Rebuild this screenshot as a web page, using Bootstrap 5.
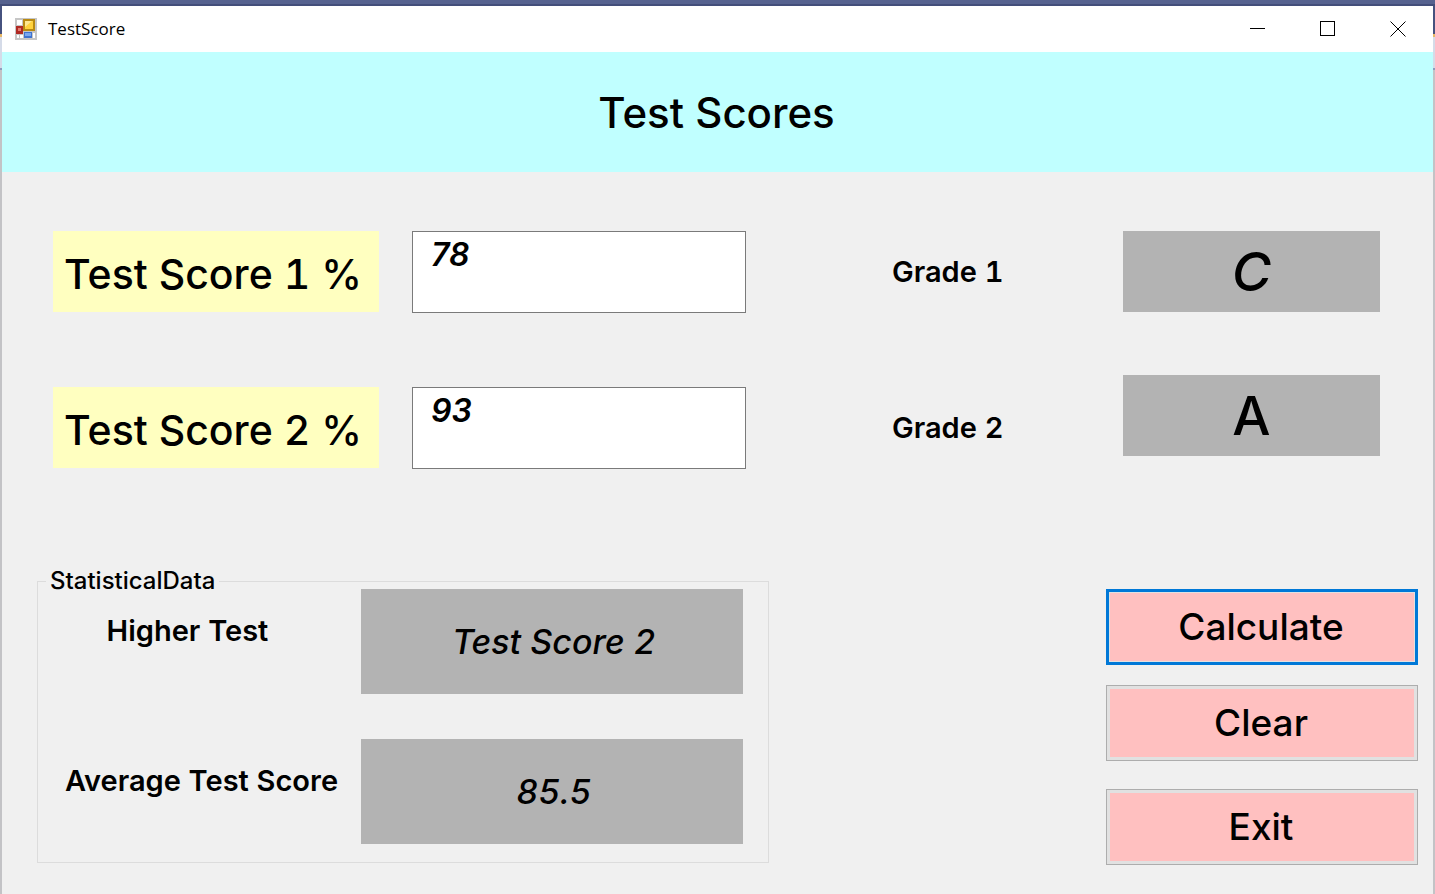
<!DOCTYPE html>
<html lang="en">
<head>
<meta charset="utf-8">
<meta name="viewport" content="width=device-width, initial-scale=1">
<title>TestScore</title>
<link href="https://cdn.jsdelivr.net/npm/bootstrap@5.3.0/dist/css/bootstrap.min.css" rel="stylesheet">
<style>
  body {
    font-family: Inter, "Liberation Sans", sans-serif;
    font-weight: 500;
    font-variant-numeric: tabular-nums;
    color: #000;
    padding: 6px 2px 1px 2px;
    background:
      linear-gradient(#000, #000) 121px 100% / 4px 2px no-repeat,
      linear-gradient(#56628f 0 4px, #434e7a 4px 6px, #46527f 6px 34px, #e8b866 34px 37px, #d5dbe8 37px 68px, #8f9bbd 68px 70px, #c3c3c6 70px);
  }
  .app-window { background: #f0f0f0; }
  .title-bar { background: #fff; height: 46px; padding-left: 13px; font: 400 17px/24px "Open Sans", "Noto Sans", sans-serif; }
  .title-text { margin-left: 11px; }
  .win-btn { width: 70px; height: 46px; line-height: 16px; }
  .win-btn svg { display: block; margin: 0 auto; }
  .banner { background: #c0ffff; height: 120px; font-size: 42px; line-height: 48px; font-weight: 500; padding: 2px 2px 0 0; }
  .scores { display: grid; grid-template-columns: 326fr 33fr 334fr 146fr 231fr 257fr; padding: 59px 53px 0 51px; }
  .score-col { display: flex; flex-direction: column; gap: 75px; }
  .grade-col { display: flex; flex-direction: column; gap: 63px; }
  .score-label { background: #ffffc0; height: 81px; font-size: 41px; line-height: 86px; white-space: nowrap; padding-left: 11px; }
  .score-input { height: 82px; margin-bottom: -1px; border: 1px solid #7a7a7a; background: #fff; font-size: 32px; line-height: 36px; font-style: italic; font-weight: 600; padding: 5px 18px; resize: none; overflow: hidden; border-radius: 0; color: #000; width: 100%; display: block; }
  .grade-label { height: 81px; font-size: 29px; line-height: 82px; white-space: nowrap; font-weight: 600; }
  .result { background: #b3b3b3; display: flex; align-items: center; justify-content: center; }
  .grade { height: 81px; font-size: 54px; line-height: 60px; }
  .stat { height: 105px; font-size: 34px; font-style: italic; flex: 0 0 382px; padding-left: 4px; }
  .stats { flex: 0 0 53%; border: 1px solid #dcdcdc; padding: 0 25px 18px 0; }
  .stats legend { font-size: 24px; line-height: 18px; margin: 0 0 -1px 8px; padding: 0 4px; }
  .stat-rows { display: flex; flex-direction: column; gap: 45px; }
  .stat-label { font-size: 29px; line-height: 36px; white-space: nowrap; font-weight: 600; }
  .lower { padding: 104px 15px 30px 35px; }
  .actions { flex: 0 0 312px; padding-top: 17px; }
  .action { height: 76px; border: 1px solid #adadad; border-radius: 0; background: #ffc0c0; box-shadow: inset 0 0 0 3px #e1e1e1; font-size: 37px; line-height: 40px; font-weight: 500; color: #000; padding: 0 2px 0 0; }
  .action:focus, .action.default { border: 3px solid #0078d7; box-shadow: inset 0 0 0 1px #e1e1e1; }
  .action + .action { margin-top: 20px; }
  .action.exit { margin-top: 28px; }
</style>
</head>
<body class="min-vh-100 d-flex flex-column">
<main class="app-window flex-grow-1 d-flex flex-column">
  <header class="title-bar d-flex align-items-center">
    <svg width="22" height="22" viewBox="0 0 22 22" aria-hidden="true">
      <rect width="22" height="22" fill="#c6c6c6"/>
      <path d="M2 2h5v5H2zM2 17h2v3H2zM5 17h3v3H5zM18 15h2v5h-2z" fill="#fff"/>
      <rect x="1" y="8" width="7" height="8" fill="#b02a24"/><rect x="3" y="10" width="3" height="3" fill="#e47b70"/>
      <rect x="8" y="1" width="12" height="12" fill="#b98a12"/><rect x="10" y="3" width="8" height="8" fill="#ffd23e"/><path d="M10 3h7l-7 6z" fill="#ffe890"/>
      <rect x="9" y="14" width="8" height="6" fill="#3f73cf"/><rect x="10" y="15" width="6" height="3" fill="#79a7f0"/>
    </svg>
    <span class="title-text me-auto">TestScore</span>
    <button type="button" class="win-btn btn p-0 border-0 rounded-0" aria-label="Minimize"><svg width="16" height="16" shape-rendering="crispEdges"><path d="M0 7.500h15" stroke="#000"/></svg></button>
    <button type="button" class="win-btn btn p-0 border-0 rounded-0" aria-label="Maximize"><svg width="16" height="16" shape-rendering="crispEdges"><path d="M.5.5h14v14H.5z" fill="none" stroke="#000"/></svg></button>
    <button type="button" class="win-btn btn p-0 border-0 rounded-0" aria-label="Close"><svg width="16" height="16"><path d="M.5.5l15 15M15.500.5l-15 15" stroke="#000"/></svg></button>
  </header>
  <h1 class="banner m-0 d-flex align-items-center justify-content-center">Test Scores</h1>

  <section class="scores">
    <div class="score-col">
      <label class="score-label" for="score1">Test Score 1 %</label>
      <label class="score-label" for="score2">Test Score 2 %</label>
    </div>
    <div></div>
    <div class="score-col">
      <textarea class="score-input" id="score1">78</textarea>
      <textarea class="score-input" id="score2">93</textarea>
    </div>
    <div></div>
    <div class="score-col">
      <label class="grade-label" for="grade1">Grade 1</label>
      <label class="grade-label" for="grade2">Grade 2</label>
    </div>
    <div class="grade-col">
      <output class="result grade fst-italic" id="grade1">C</output>
      <output class="result grade" id="grade2">A</output>
    </div>
  </section>

  <section class="lower d-flex justify-content-between align-items-start">
    <fieldset class="stats">
      <legend class="float-none w-auto">StatisticalData</legend>
      <div class="stat-rows">
        <div class="d-flex">
          <label class="stat-label flex-grow-1 text-center pt-4 pe-4" for="higher">Higher Test</label>
          <output class="result stat" id="higher">Test Score 2</output>
        </div>
        <div class="d-flex">
          <label class="stat-label flex-grow-1 text-center pt-4 ps-1" for="average">Average Test Score</label>
          <output class="result stat" id="average">85.5</output>
        </div>
      </div>
    </fieldset>
    <div class="actions d-flex flex-column">
      <button type="button" class="action default btn">Calculate</button>
      <button type="button" class="action btn">Clear</button>
      <button type="button" class="action exit btn">Exit</button>
    </div>
  </section>
</main>
<script src="https://cdn.jsdelivr.net/npm/bootstrap@5.3.0/dist/js/bootstrap.bundle.min.js"></script>
</body>
</html>
